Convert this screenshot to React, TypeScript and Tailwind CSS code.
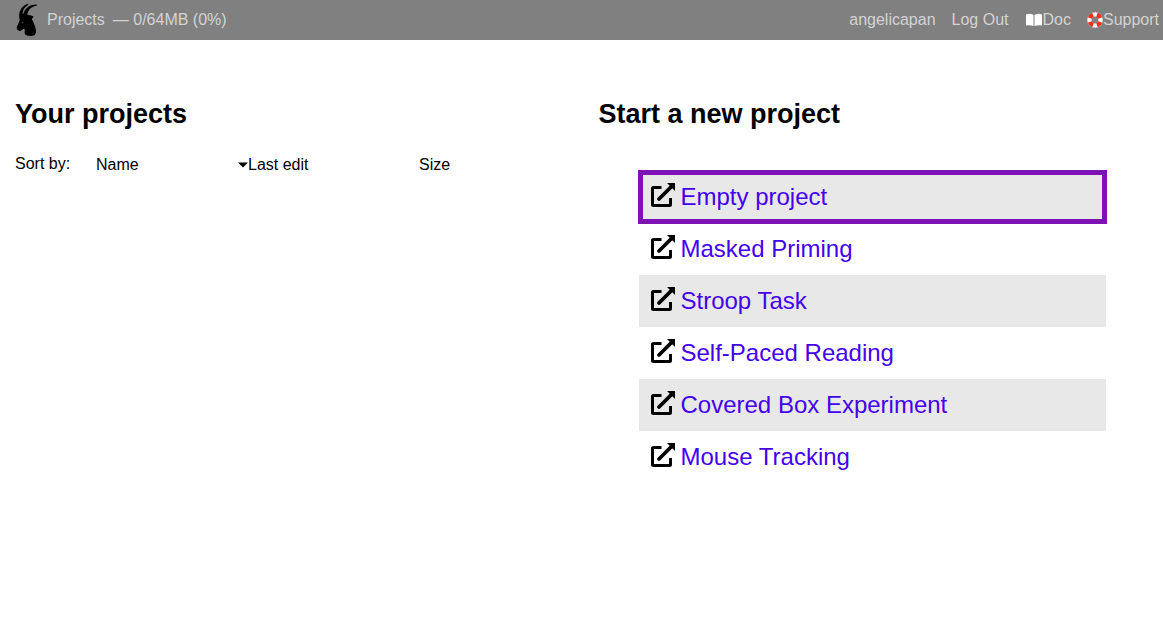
import React from "react";

const templates = [
  "Empty project",
  "Masked Priming",
  "Stroop Task",
  "Self-Paced Reading",
  "Covered Box Experiment",
  "Mouse Tracking",
];

function GoatLogo() {
  return (
    <svg viewBox="0 0 22 34" className="h-[34px] w-[22px]" aria-hidden="true">
      <path
        d="M3.200 14C2.800 7.500 6.500 2 12.300 .8L12.500 1.500C8.800 3.800 6.800 7 6.500 11L7.400 10.800C8.800 5.500 13.500 1.300 20.800 1.500L21 2.500C15.500 3.500 12.200 6.800 11.300 11.400C12.500 12 15.500 12.200 17.300 13.200C17.200 14.600 16.300 15.400 15.700 16C17.500 18.500 19.200 23 19.900 27C20.400 30.500 19 32.700 15.500 33C12.500 33.200 9 32.400 8.600 30C8.500 28.500 9 27.500 8.700 26.300C7.800 25.800 6.800 26 5.800 27C4.500 28.500 3.300 28.300 2.300 27.200C.9 26.800 .4 25.300 .8 23.800C2.100 21.200 3.500 19 3.700 16.500Z"
      />
      <path d="M5.400 19.600L7.600 19.400L6.700 20.500Z" fill="#808080" />
    </svg>
  );
}

function BookIcon() {
  return (
    <svg viewBox="0 0 17 14" className="h-[14px] w-[18px]" fill="#fff" aria-hidden="true">
      <path d="M.5 1.500C3 .5 6 .6 8 2V13C6 12 3 11.900 .5 12.500ZM9 2C11 .6 14 .5 16.500 1.500V12.500C14 11.900 11 12 9 13Z" />
    </svg>
  );
}

function LifebuoyIcon() {
  return (
    <svg viewBox="0 0 16 16" className="size-4" fill="none" aria-hidden="true">
      <circle cx="8" cy="8" r="5.600" stroke="#f2f2f2" strokeWidth="4.400" />
      <circle
        cx="8"
        cy="8"
        r="5.600"
        stroke="#fb2b18"
        strokeWidth="4.400"
        pathLength="80"
        strokeDasharray="10 10"
        strokeDashoffset="-5"
      />
    </svg>
  );
}

function OpenIcon() {
  return (
    <svg viewBox="0 0 24 24" className="mb-1 size-6 shrink-0" fill="none" stroke="#000" aria-hidden="true">
      <path d="M10.500 4.500H2.500Q1.500 4.500 1.500 5.500V21.500Q1.500 22.500 2.500 22.500H18.500Q19.500 22.500 19.500 21.500V15" strokeWidth="3" />
      <path d="M8 16L20 4" strokeWidth="3.800" strokeLinecap="round" />
      <path d="M16 0H24V8Z" fill="#000" stroke="none" />
    </svg>
  );
}

export default function App() {
  return (
    <div className="min-h-screen bg-white font-['Liberation_Sans',Arial,sans-serif] text-base text-black">
      <header className="flex h-10 items-center justify-between bg-[#808080] pr-1 pl-4 text-[#d3d3d3]">
        <div className="flex items-center">
          <a href="#home" aria-label="Home">
            <GoatLogo />
          </a>
          <a href="#projects" className="ml-[9px]">Projects</a>
          <span className="ml-2">— 0/64MB (0%)</span>
        </div>
        <nav className="flex items-center gap-4">
          <a href="#account">angelicapan</a>
          <a href="#logout">Log Out</a>
          <a href="#doc" className="flex items-center"><BookIcon />Doc</a>
          <a href="#support" className="flex items-center"><LifebuoyIcon />Support</a>
        </nav>
      </header>

      <main className="grid grid-cols-2 pt-14">
        <section className="pl-[15px]">
          <h2 className="text-[27px] leading-9 font-bold">Your projects</h2>
          <div className="mt-[21px] flex items-center leading-5">
            <span className="w-[81px]">Sort by:</span>
            <div className="flex pt-[2px]">
              <button type="button" className="w-[142px] text-left">Name</button>
              <button type="button" className="flex w-[181px] items-center">
                <svg viewBox="0 0 10 6" className="h-[6px] w-[10px]" aria-hidden="true">
                  <path d="M0 .5H10L5 5.500Z" />
                </svg>
                Last edit
              </button>
              <button type="button">Size</button>
            </div>
          </div>
        </section>

        <section className="pr-[57px] pl-[17px]">
          <h2 className="text-[27px] leading-9 font-bold">Start a new project</h2>
          <ul className="mt-[39px] ml-10">
            {templates.map((name, index) => (
              <li key={name} className="odd:bg-[#e8e8e8]">
                <a
                  href="#new"
                  className={
                    index === 0
                      ? "flex h-[52px] items-center gap-[6px] pl-3 text-2xl text-[#4400ee] outline-5 -outline-offset-4 outline-[#7d12b5]"
                      : "flex h-[52px] items-center gap-[6px] pl-3 text-2xl text-[#4400ee]"
                  }
                >
                  <OpenIcon />
                  {name}
                </a>
              </li>
            ))}
          </ul>
        </section>
      </main>
    </div>
  );
}
